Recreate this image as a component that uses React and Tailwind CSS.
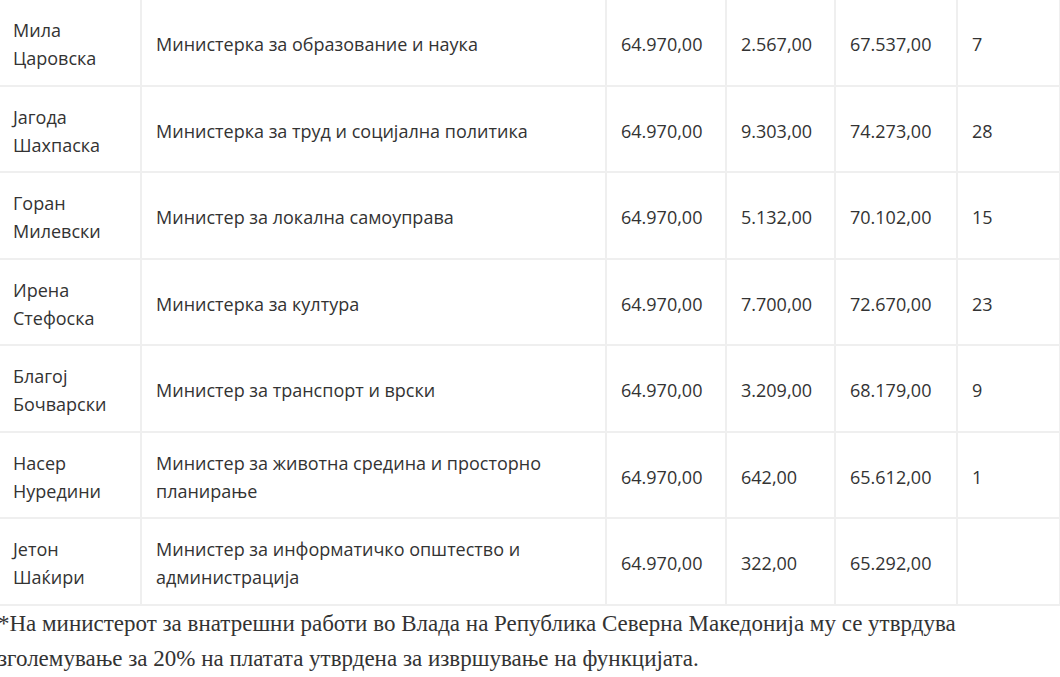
const ROWS = [
  { name: ["Мила", "Царовска"], title: "Министерка за образование и наука", base: "64.970,00", extra: "2.567,00", total: "67.537,00", n: "7" },
  { name: ["Јагода", "Шахпаска"], title: "Министерка за труд и социјална политика", base: "64.970,00", extra: "9.303,00", total: "74.273,00", n: "28" },
  { name: ["Горан", "Милевски"], title: "Министер за локална самоуправа", base: "64.970,00", extra: "5.132,00", total: "70.102,00", n: "15" },
  { name: ["Ирена", "Стефоска"], title: "Министерка за култура", base: "64.970,00", extra: "7.700,00", total: "72.670,00", n: "23" },
  { name: ["Благој", "Бочварски"], title: "Министер за транспорт и врски", base: "64.970,00", extra: "3.209,00", total: "68.179,00", n: "9" },
  { name: ["Насер", "Нуредини"], title: ["Министер за животна средина и просторно", "планирање"], base: "64.970,00", extra: "642,00", total: "65.612,00", n: "1" },
  { name: ["Јетон", "Шаќири"], title: ["Министер за информатичко општество и", "администрација"], base: "64.970,00", extra: "322,00", total: "65.292,00", n: "" },
];

const cell = "border-2 border-[#efefef] pl-[14px] pr-2 pt-[4px] pb-0 align-middle";

export default function App() {
  return (
    <div className="w-[1060px] h-[677px] overflow-hidden bg-white">
      <table className="-mt-[2px] -ml-[3px] w-[1062px] border-collapse table-fixed text-[18px] leading-[28px] text-[#333] font-['Open_Sans',sans-serif]">
        <colgroup>
          <col className="w-[143px]" />
          <col className="w-[465px]" />
          <col className="w-[120px]" />
          <col className="w-[109px]" />
          <col className="w-[122px]" />
          <col className="w-[103px]" />
        </colgroup>
        <tbody>
          {ROWS.map((r, i) => (
            <tr key={i} className="h-[86.5px]">
              <td className={cell}>
                {r.name[0]}
                <br />
                {r.name[1]}
              </td>
              <td className={cell}>
                {Array.isArray(r.title) ? (
                  <>
                    {r.title[0]}
                    <br />
                    {r.title[1]}
                  </>
                ) : (
                  r.title
                )}
              </td>
              <td className={cell}>{r.base}</td>
              <td className={cell}>{r.extra}</td>
              <td className={cell}>{r.total}</td>
              <td className={cell}>{r.n}</td>
            </tr>
          ))}
        </tbody>
      </table>
      <p className="-ml-[2px] text-[23px] leading-[35px] text-[#333] font-['Liberation_Serif',serif] whitespace-nowrap">
        *На министерот за внатрешни работи во Влада на Република Северна Македонија му се утврдува
        <br />
        зголемување за 20% на платата утврдена за извршување на функцијата.
      </p>
    </div>
  );
}
